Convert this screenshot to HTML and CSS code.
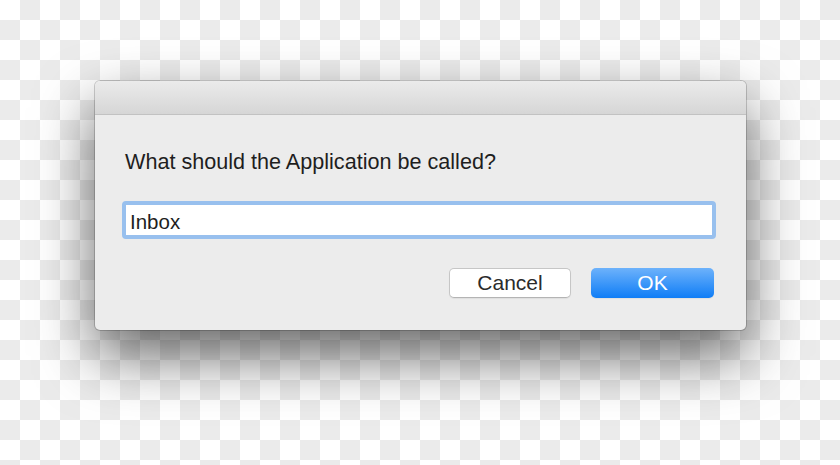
FILE: index.html
```html
<!DOCTYPE html>
<html lang="en">
<head>
    <meta charset="UTF-8">
    <meta name="viewport" content="width=device-width, initial-scale=1.0">
    <title>Application Name</title>
    <link rel="stylesheet" href="styles.css">
</head>
<body>
    <div class="dialog">
        <div class="titlebar"></div>

        <div class="content">
            <p class="prompt">What should the Application be called?</p>
            <input type="text" class="field" value="Inbox">

            <div class="buttons">
                <button class="btn">Cancel</button>
                <button class="btn btn-ok">OK</button>
            </div>
        </div>
    </div>
</body>
</html>
```

FILE: styles.css
```css
/* Page: transparency checkerboard */
body {
    margin: 0;
    padding: 81px 0 0 95px;
    height: 465px;
    box-sizing: border-box;
    overflow: hidden;
    font-family: "Liberation Sans", Arial, sans-serif;
    background-color: #fff;
    background-image: conic-gradient(#ebebeb 0 25%, #fff 0 50%, #ebebeb 0 75%, #fff 0);
    background-size: 40px 40px;
}

/* Dialog window */
.dialog {
    width: 651px;
    height: 249px;
    background-color: #ececec;
    border-radius: 5px;
    overflow: hidden;
    box-shadow: 0 0 0 1px rgba(0, 0, 0, 0.18),
                0 26px 58px rgba(0, 0, 0, 0.6);
}

.titlebar {
    height: 33px;
    background: linear-gradient(#ebebeb, #d6d6d6);
    border-bottom: 1px solid #c2c2c2;
}

.content {
    padding: 0 30px 0 27px;
}

.prompt {
    margin: 35px 0 0 3px;
    font-size: 21.6px;
    line-height: 24px;
    color: #1e1e1e;
}

/* Focused text field */
.field {
    display: block;
    width: 100%;
    height: 38px;
    box-sizing: border-box;
    margin-top: 27px;
    padding: 3px 4px 0;
    border: 4px solid #98c0ee;
    border-radius: 4px;
    background-color: #fff;
    font-family: inherit;
    font-size: 20.5px;
    color: #1e1e1e;
    outline: none;
}

/* Buttons */
.buttons {
    display: flex;
    justify-content: flex-end;
    gap: 20px;
    margin-top: 29px;
    padding-right: 2px;
}

.btn {
    width: 122px;
    height: 30px;
    box-sizing: border-box;
    border: 1px solid #c6c6c6;
    border-bottom-color: #b4b4b4;
    border-radius: 5px;
    background-color: #fff;
    box-shadow: 0 1px 1px rgba(0, 0, 0, 0.06);
    font-family: inherit;
    font-size: 21px;
    color: #2b2b2b;
    padding: 0;
}

.btn-ok {
    width: 123px;
    border: none;
    background: linear-gradient(#6db2fb, #0f7df6);
    color: #fff;
}
```
